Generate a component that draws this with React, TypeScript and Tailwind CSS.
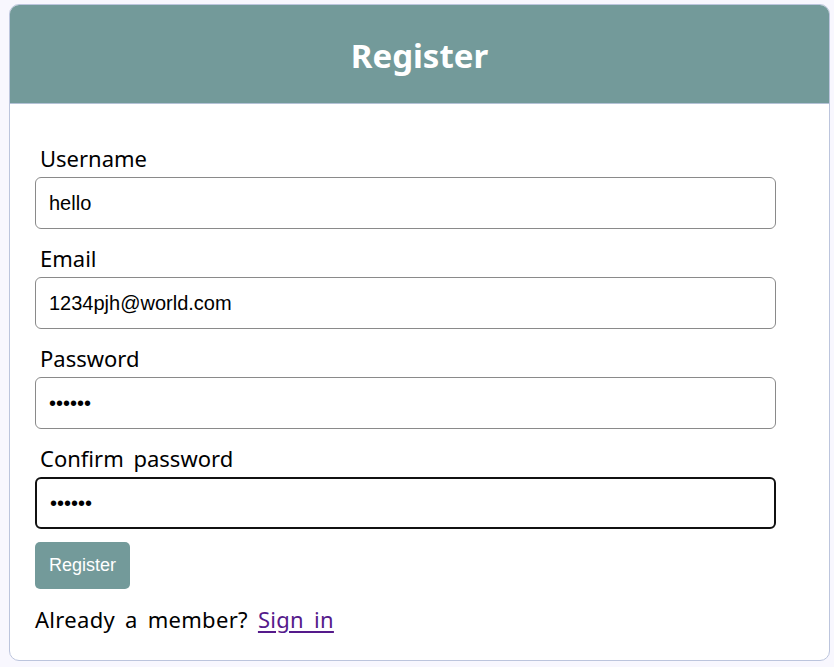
import React from "react";

const labelFont = { fontFamily: '"Noto Sans", "Open Sans", sans-serif', wordSpacing: "4px" };

function Field({ label, value, type = "text", focused = false }: { label: string; value: string; type?: string; focused?: boolean }) {
  return (
    <div className="flex flex-col">
      <label className="ml-[5px] text-[22px] leading-[30px] text-black mb-[4px]" style={labelFont}>
        {label}
      </label>
      <input
        type={type}
        defaultValue={value}
        readOnly
        className={
          "w-[741px] h-[52px] rounded-[6px] bg-white px-[13px] text-[20px] text-black outline-none font-['Liberation_Sans',Arial,sans-serif] " +
          (focused ? "border-2 border-[#111] px-[12px]" : "border border-[#8a8a8a]")
        }
      />
    </div>
  );
}

export default function App() {
  return (
    <div className="min-h-[667px] w-[834px] bg-[#f8f7fe] pt-[4px] pl-[9px]">
      <div className="w-[821px] h-[657px] rounded-[10px] border border-[#bcc5dd] bg-white overflow-hidden">
        <div className="h-[99px] bg-[#739a9a] border-b border-[#b4c2d6] flex items-center justify-center pt-[3px]">
          <h1 className="text-white font-bold text-[33px] leading-none" style={labelFont}>
            Register
          </h1>
        </div>
        <div className="pl-[25px] pt-[39px] flex flex-col gap-[14px]">
          <Field label="Username" value="hello" />
          <Field label="Email" value="1234pjh@world.com" />
          <Field label="Password" value="123456" type="password" />
          <Field label="Confirm password" value="123456" type="password" focused />
        </div>
        <div className="pl-[25px] pt-[13px]">
          <button className="h-[47px] w-[95px] rounded-[5px] bg-[#739a9a] text-white text-[18px] font-['Liberation_Sans',Arial,sans-serif]">
            Register
          </button>
          <p className="mt-[15px] text-[22px] leading-[30px] text-black tracking-[0.3px]" style={labelFont}>
            Already a member?{" "}
            <a href="#" className="text-[#551a8b] underline underline-offset-[3px]">
              Sign in
            </a>
          </p>
        </div>
      </div>
    </div>
  );
}
